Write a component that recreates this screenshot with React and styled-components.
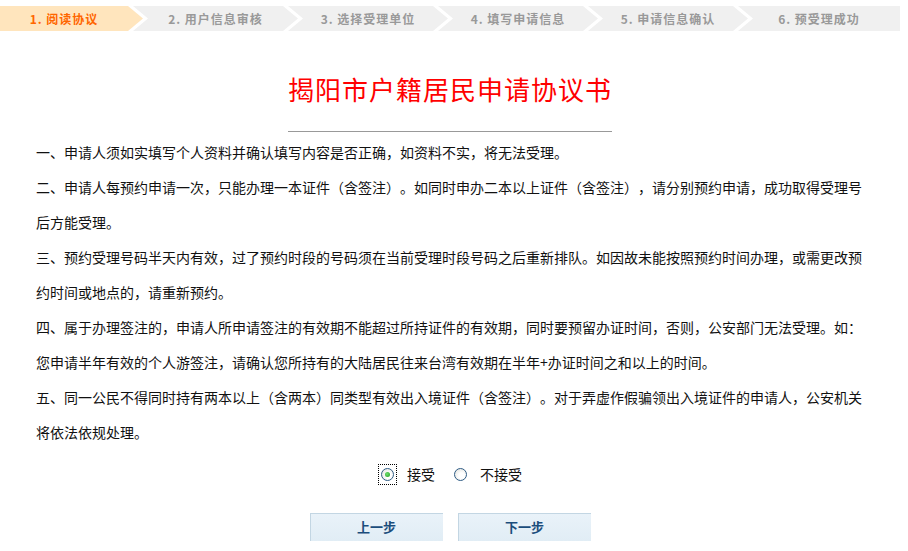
import React, { useState } from 'react';
import styled, { createGlobalStyle, css } from 'styled-components';

const GlobalStyle = createGlobalStyle`
  body {
    margin: 0;
    background: #fff;
    font-family: "Noto Sans CJK SC", "Noto Sans", sans-serif;
    text-spacing-trim: space-all;
  }
`;

const steps = [
  '1. 阅读协议',
  '2. 用户信息审核',
  '3. 选择受理单位',
  '4. 填写申请信息',
  '5. 申请信息确认',
  '6. 预受理成功',
];

const clauses = [
  '一、申请人须如实填写个人资料并确认填写内容是否正确，如资料不实，将无法受理。',
  '二、申请人每预约申请一次，只能办理一本证件（含签注）。如同时申办二本以上证件（含签注），请分别预约申请，成功取得受理号后方能受理。',
  '三、预约受理号码半天内有效，过了预约时段的号码须在当前受理时段号码之后重新排队。如因故未能按照预约时间办理，或需更改预约时间或地点的，请重新预约。',
  '四、属于办理签注的，申请人所申请签注的有效期不能超过所持证件的有效期，同时要预留办证时间，否则，公安部门无法受理。如：您申请半年有效的个人游签注，请确认您所持有的大陆居民往来台湾有效期在半年+办证时间之和以上的时间。',
  '五、同一公民不得同时持有两本以上（含两本）同类型有效出入境证件（含签注）。对于弄虚作假骗领出入境证件的申请人，公安机关将依法依规处理。',
];

const StepBar = styled.div`
  display: flex;
  width: 900px;
  height: 25px;
  margin-top: 6px;
`;

const Step = styled.div`
  flex: none;
  display: flex;
  align-items: center;
  justify-content: center;
  box-sizing: border-box;
  font-size: 12px;
  font-weight: bold;
  letter-spacing: 1px;
  white-space: pre;
  color: ${(p) => (p.active ? '#ff6600' : '#999')};
  background: ${(p) => (p.active ? '#ffe5bd' : '#f0f0f0')};
  ${(p) => (p.first
    ? css`
      width: 143px;
      padding-right: 15px;
      clip-path: polygon(0 0, 128px 0, 143px 50%, 128px 100%, 0 100%);
    `
    : css`
      margin-left: -10px;
      padding: 0 15px;
    `)}
  ${(p) => p.middle && css`
    width: ${p.wide ? 165 : 160}px;
    clip-path: polygon(0 0, calc(100% - 15px) 0, 100% 50%, calc(100% - 15px) 100%, 0 100%, 15px 50%);
  `}
  ${(p) => p.last && css`
    width: 162px;
    clip-path: polygon(0 0, 100% 0, 100% 100%, 0 100%, 15px 50%);
  `}
`;

const Content = styled.div`
  width: 828px;
  margin-left: 36px;
`;

const Title = styled.h1`
  margin: 38px 0 0;
  text-align: center;
  font-size: 26px;
  letter-spacing: 1px;
  line-height: 40px;
  font-weight: normal;
  color: #ff0000;
`;

const Divider = styled.div`
  width: 324px;
  margin: 22px auto 0;
  border-top: 1px solid #999;
`;

const Clauses = styled.div`
  margin-top: 3px;
`;

const Clause = styled.p`
  margin: 0;
  font-size: 14px;
  line-height: 35px;
  color: #111;
`;

const Choices = styled.div`
  display: flex;
  justify-content: center;
  align-items: center;
  height: 22px;
  margin-top: 13px;
  gap: 16px;
`;

const Choice = styled.label`
  display: flex;
  align-items: center;
  gap: 10px;
  font-size: 14px;
  color: #111;
  cursor: pointer;
`;

const RadioBox = styled.span`
  display: flex;
  align-items: center;
  justify-content: center;
  width: 19px;
  height: 21px;
  box-sizing: border-box;
  border: 1px dotted ${(p) => (p.focused ? '#000' : 'transparent')};
`;

const Radio = styled.span`
  display: flex;
  align-items: center;
  justify-content: center;
  width: 13px;
  height: 13px;
  box-sizing: border-box;
  border-radius: 50%;
  border: 1px solid #2f5c85;
  background: radial-gradient(circle at 60% 60%, #ffffff 30%, #dcdcd6 100%);
  &::after {
    content: '';
    display: ${(p) => (p.checked ? 'block' : 'none')};
    width: 5px;
    height: 5px;
    border-radius: 50%;
    background: radial-gradient(circle at 40% 40%, #6fe06f, #1f9a1f);
  }
`;

const Buttons = styled.div`
  display: flex;
  justify-content: center;
  gap: 15px;
  margin-top: 28px;
`;

const NavButton = styled.button`
  width: 133px;
  height: 28px;
  padding: 0 0 2px;
  border: none;
  border-top: 1px solid #c3d6e3;
  border-left: 1px solid #c3d6e3;
  background: linear-gradient(#e9f2f9, #e1edf5);
  color: #1b4d7c;
  font-family: "Noto Sans CJK SC", "Noto Sans", sans-serif;
  font-size: 13px;
  font-weight: bold;
  cursor: pointer;
`;

export default function App() {
  const [accepted, setAccepted] = useState(true);

  return (
    <>
      <GlobalStyle />
      <StepBar>
        {steps.map((s, i) => (
          <Step
            key={s}
            active={i === 0}
            first={i === 0}
            middle={i > 0 && i < steps.length - 1}
            wide={i === 1}
            last={i === steps.length - 1}
          >
            {s}
          </Step>
        ))}
      </StepBar>
      <Content>
        <Title>揭阳市户籍居民申请协议书</Title>
        <Divider />
        <Clauses>
          {clauses.map((c) => <Clause key={c}>{c}</Clause>)}
        </Clauses>
        <Choices>
          <Choice onClick={() => setAccepted(true)}>
            <RadioBox focused><Radio checked={accepted} /></RadioBox>
            接受
          </Choice>
          <Choice onClick={() => setAccepted(false)}>
            <RadioBox><Radio checked={!accepted} /></RadioBox>
            不接受
          </Choice>
        </Choices>
        <Buttons>
          <NavButton type="button">上一步</NavButton>
          <NavButton type="button">下一步</NavButton>
        </Buttons>
      </Content>
    </>
  );
}
